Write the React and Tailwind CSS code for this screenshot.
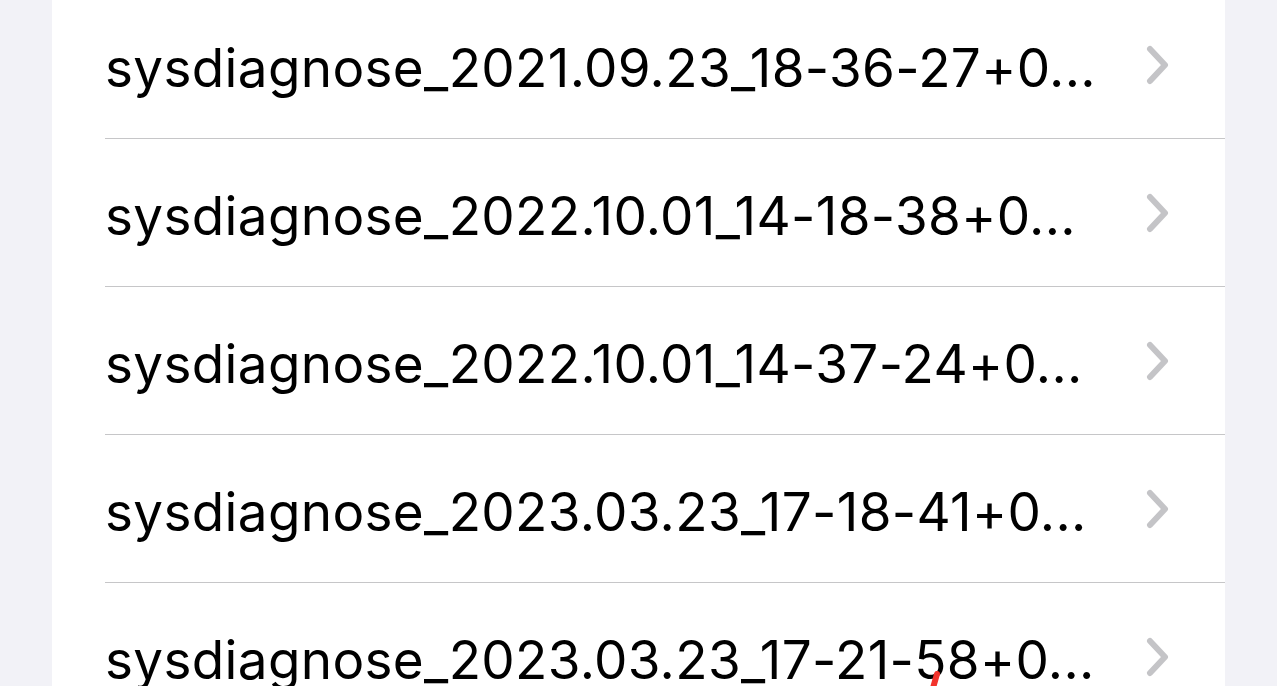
import React from 'react';

const files = [
    'sysdiagnose_2021.09.23_18-36-27+0...',
    'sysdiagnose_2022.10.01_14-18-38+0...',
    'sysdiagnose_2022.10.01_14-37-24+0...',
    'sysdiagnose_2023.03.23_17-18-41+0...',
    'sysdiagnose_2023.03.23_17-21-58+0...',
];

const Chevron = () => (
    <svg width="24" height="40" viewBox="0 0 24 40" className="shrink-0">
        <polyline points="4,4 19,20 4,36" fill="none" stroke="#c4c4c7" strokeWidth="6" strokeLinecap="round" strokeLinejoin="round" />
    </svg>
);

const App = () => {
    return (
        <div className="w-[1277px] h-[686px] overflow-hidden bg-[#f2f2f7]" style={{ fontFamily: 'Inter, "Noto Sans", sans-serif' }}>
            <div className="relative mx-[52px] flex h-full flex-col overflow-hidden bg-white">
                <div className="-mt-[9px] flex flex-col">
                    {files.map((name, i) => (
                        <div key={name} className="pl-[53px]">
                            <div className="flex h-[147px] items-center pr-[55px]">
                                <span className="flex-1 whitespace-nowrap pt-[6px] text-[53px] leading-[80px] tracking-[0.35px] text-black">{name}</span>
                                <Chevron />
                            </div>
                            {i < files.length - 1 && <div className="h-px bg-[#c6c6c8]" />}
                        </div>
                    ))}
                </div>
                {/* red pen mark */}
                <svg className="absolute left-[876px] top-[670px]" width="14" height="18" viewBox="0 0 14 18">
                    <path d="M9 4 L5 18" stroke="#f2332c" strokeWidth="6" strokeLinecap="round" />
                </svg>
            </div>
        </div>
    );
};

export default App;
